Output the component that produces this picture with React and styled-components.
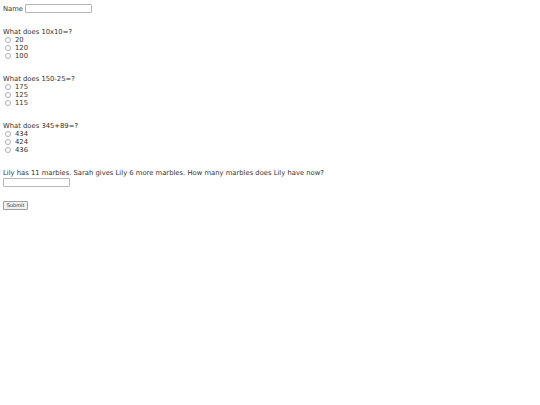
import React from "react";
import styled, { createGlobalStyle } from "styled-components";

const Global = createGlobalStyle`
  html, body { margin: 0; padding: 0; background: #fff; }
  body { font-family: "DejaVu Sans", Verdana, sans-serif; font-size: 6.8px; color: #333; }
`;

const Form = styled.form`
  display: flex;
  flex-direction: column;
  align-items: flex-start;
  padding: 4px 3px;
`;

const NameRow = styled.div`
  display: flex;
  align-items: center;
  gap: 2px;
  height: 9px;
  line-height: 8px;
`;

const TextBox = styled.input`
  box-sizing: border-box;
  width: ${(p) => p.$w}px;
  height: 9px;
  margin: ${(p) => p.$mt || 0}px 0 0 0;
  padding: 0;
  border: 1px solid #b5b5b5;
  border-radius: 1px;
  background: #fff;
  font-size: 6px;
`;

const Question = styled.fieldset`
  border: 0;
  margin: ${(p) => p.$mt}px 0 0 0;
  padding: 0;
  display: flex;
  flex-direction: column;
  line-height: 8px;
`;

const Prompt = styled.div`
  height: 8px;
`;

const Option = styled.label`
  display: flex;
  align-items: center;
  height: 8px;
`;

const Radio = styled.input.attrs({ type: "radio" })`
  appearance: none;
  box-sizing: border-box;
  width: 6px;
  height: 6px;
  margin: 0 4px 0 2px;
  border: 1px solid #b0b0b0;
  border-radius: 50%;
  background: #fff;
`;

const Submit = styled.button`
  box-sizing: border-box;
  margin-top: 14px;
  height: 9px;
  width: 25px;
  padding: 0;
  font-family: "DejaVu Sans", Verdana, sans-serif;
  font-size: 5px;
  line-height: 7px;
  color: #333;
  background: #f0f0f0;
  border: 1px solid #a0a0a0;
  border-radius: 1px;
`;

const questions = [
  { q: "What does 10x10=?", opts: ["20", "120", "100"] },
  { q: "What does 150-25=?", opts: ["175", "125", "115"] },
  { q: "What does 345+89=?", opts: ["434", "424", "436"] },
];

export default function App() {
  return (
    <>
      <Global />
      <Form onSubmit={(e) => e.preventDefault()}>
        <NameRow>
          <span>Name</span>
          <TextBox $w={67} />
        </NameRow>
        {questions.map((item, i) => (
          <Question key={i} $mt={15}>
            <Prompt>{item.q}</Prompt>
            {item.opts.map((o) => (
              <Option key={o}>
                <Radio name={`q${i}`} />
                {o}
              </Option>
            ))}
          </Question>
        ))}
        <Question $mt={15}>
          <Prompt>Lily has 11 marbles. Sarah gives Lily 6 more marbles. How many marbles does Lily have now?</Prompt>
          <TextBox $w={67} $mt={1} />
        </Question>
        <Submit type="submit">Submit</Submit>
      </Form>
    </>
  );
}
